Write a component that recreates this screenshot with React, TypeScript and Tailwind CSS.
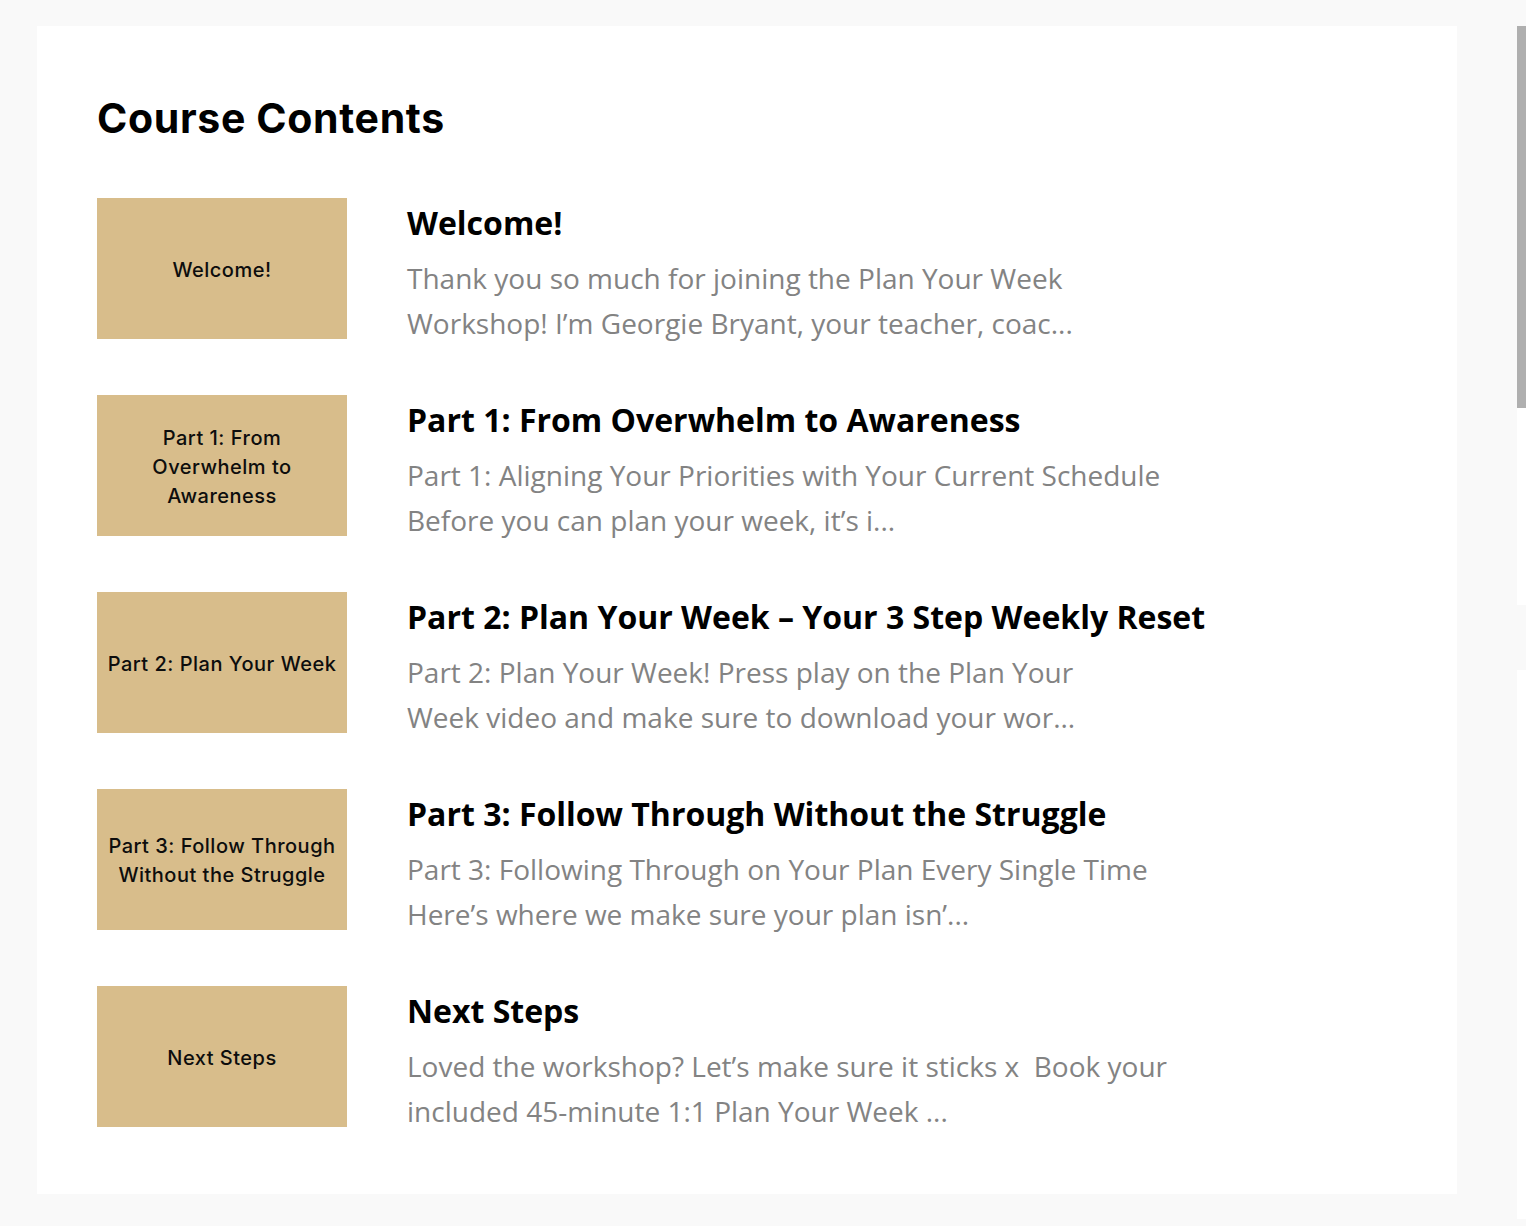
import React from "react";

const items = [
  {
    thumb: ["Welcome!"],
    title: "Welcome!",
    desc: ["Thank you so much for joining the Plan Your Week", "Workshop! I\u2019m Georgie Bryant, your teacher, coac..."],
  },
  {
    thumb: ["Part 1: From", "Overwhelm to", "Awareness"],
    title: "Part 1: From Overwhelm to Awareness",
    desc: ["Part 1: Aligning Your Priorities with Your Current Schedule", "Before you can plan your week, it\u2019s i..."],
  },
  {
    thumb: ["Part 2: Plan Your Week"],
    title: "Part 2: Plan Your Week \u2013 Your 3 Step Weekly Reset",
    desc: ["Part 2: Plan Your Week! Press play on the Plan Your", "Week video and make sure to download your wor..."],
  },
  {
    thumb: ["Part 3: Follow Through", "Without the Struggle"],
    title: "Part 3: Follow Through Without the Struggle",
    desc: ["Part 3: Following Through on Your Plan Every Single Time", "Here\u2019s where we make sure your plan isn\u2019..."],
  },
  {
    thumb: ["Next Steps"],
    title: "Next Steps",
    desc: ["Loved the workshop? Let\u2019s make sure it sticks x\u00a0 Book your", "included 45-minute 1:1 Plan Your Week ..."],
  },
];

export default function App() {
  return (
    <div className="flex min-h-[1226px] w-full bg-[#f9f9f9]">
      <div className="flex-none pl-[37px] pt-[26px]">
        <div className="flex h-[1168px] w-[1420px] flex-col bg-white pl-[60px] pt-[68px]">
          <h1
            className="text-[41px] font-bold leading-[48px] tracking-[0.65px] text-black"
            style={{ fontFamily: "Inter, 'Noto Sans', sans-serif" }}
          >
            Course Contents
          </h1>
          <div className="mt-[56px] flex flex-col gap-[56px]">
            {items.map((it, i) => (
              <div key={i} className="flex h-[141px]">
                <div
                  className="flex h-[141px] w-[250px] flex-none flex-col items-center justify-center bg-[#d8bd8b] pt-[3px] text-center text-[20px] font-medium leading-[29px] tracking-[0.5px] text-[#0d0d0d]"
                  style={{ fontFamily: "Inter, 'Noto Sans', sans-serif" }}
                >
                  {it.thumb.map((t, j) => (
                    <div key={j}>{t}</div>
                  ))}
                </div>
                <div
                  className="ml-[60px] flex flex-col pt-[5px]"
                  style={{ fontFamily: "'Open Sans', 'Noto Sans', sans-serif" }}
                >
                  <div className="whitespace-nowrap text-[32px] font-bold leading-[40px] text-black">{it.title}</div>
                  <div className="mt-[13px] whitespace-nowrap text-[28px] leading-[45px] text-[#838383]">
                    {it.desc.map((d, j) => (
                      <div key={j}>{d}</div>
                    ))}
                  </div>
                </div>
              </div>
            ))}
          </div>
        </div>
      </div>
      <div className="ml-[60px] flex w-[9px] flex-none flex-col pt-[26px]">
        <div className="h-[382px] bg-[#afafaf]" />
        <div className="h-[197px] bg-white" />
        <div className="h-[65px] bg-[#f9f9f9]" />
        <div className="h-[549px] bg-white" />
      </div>
    </div>
  );
}
